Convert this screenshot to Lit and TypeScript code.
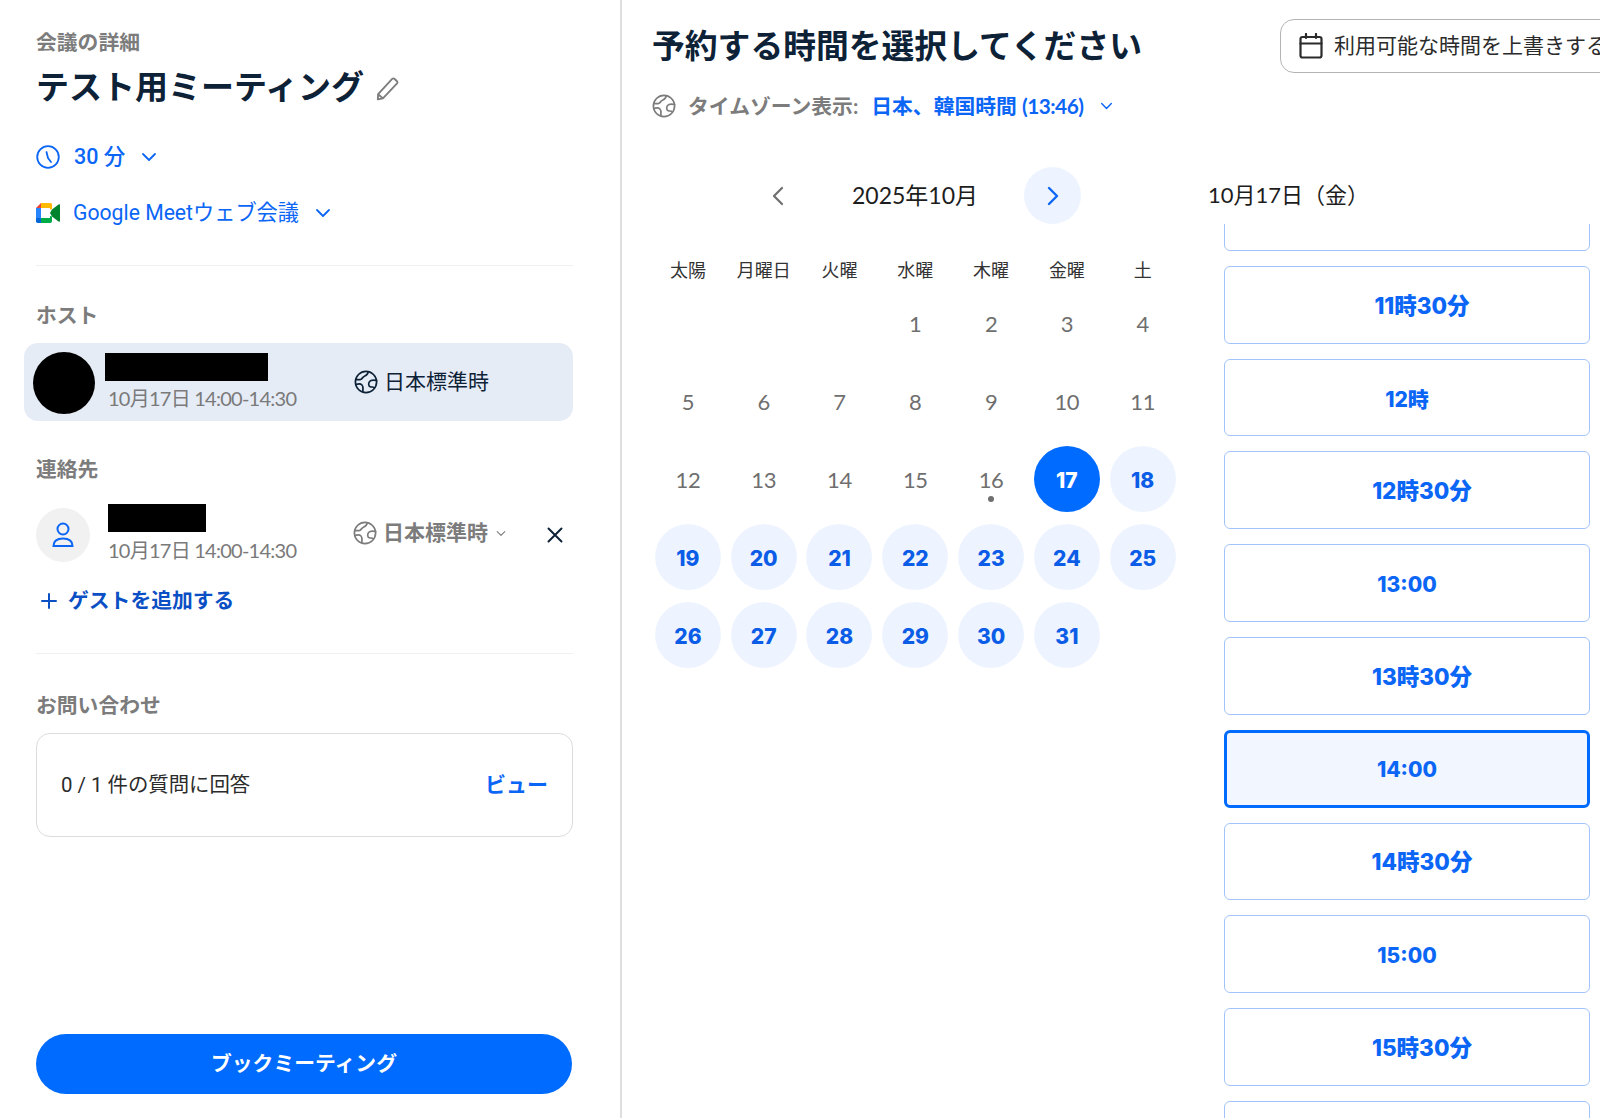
import { LitElement, html, css, svg } from 'lit';
import { customElement } from 'lit/decorators.js';
import { classMap } from 'lit/directives/class-map.js';

const chevron = (cls: string) => html`<svg class=${cls} viewBox="0 0 16 10" fill="none" stroke="currentColor" stroke-width="1.8" stroke-linecap="round" stroke-linejoin="round"><path d="M2 2l6 6 6-6"/></svg>`;

const globe = html`<svg class="globe" viewBox="0 0 24 24" fill="none" stroke="currentColor" stroke-width="1.7" stroke-linecap="round" stroke-linejoin="round">
  <circle cx="12" cy="12" r="10.6"/>
  <path d="M14 1.800c.2 3-2 3.800-3.600 4.400-1.700.6-2.200 2.800-3.800 3.300-1.200.4-2.500.2-4.700-.2"/>
  <path d="M22.600 10.500c-2.500-.6-5.500-.8-7 1-1.300 1.600-1.300 4.500.6 5.300 1.500.6 2.500-.3 3.900.8"/>
  <path d="M2 14.500c2-.6 4.500-1 6 .5 1.500 1.500 1 3.500.8 6.500"/>
</svg>`;

const meetLogo = svg`
  <path d="M5 0L0 5h5z" fill="#ea4335"/>
  <path d="M5 0h9.500A1.500 1.500 0 0 1 16 1.500V6l-2 .5V5H5z" fill="#ffba00"/>
  <path d="M0 5h5v10H0z" fill="#2684fc"/>
  <path d="M0 15h5v5H1.800A1.800 1.800 0 0 1 0 18.200z" fill="#0066da"/>
  <path d="M5 15h9v-2l2 .5v4.700a1.800 1.800 0 0 1-1.800 1.800H5z" fill="#00ac47"/>
  <path d="M14 10l2-3.500 6.500-5c.6-.4 1.500 0 1.500.8v15.400c0 .8-.9 1.200-1.500.8L16 13.500z" fill="#00832d"/>`;

const weekdays = ['太陽', '月曜日', '火曜', '水曜', '木曜', '金曜', '土'];
// first and last rows are scrolled out of view, only their boxes show
const slots = ['', '11時30分', '12時', '12時30分', '13:00', '13時30分', '14:00', '14時30分', '15:00', '15時30分', ''];

@customElement('app-root')
export class AppRoot extends LitElement {
  static styles = css`
    :host {
      display: block;
      width: 1600px;
      height: 1118px;
      overflow: hidden;
      background: #fff;
      color: #0d2237;
      font-family: Lato, "Noto Sans CJK JP", sans-serif;
    }

    .page {
      display: flex;
      height: 1118px;
    }

    /* left column */
    .side {
      box-sizing: border-box;
      width: 622px;
      flex: none;
      padding: 29px 47px 24px 36px;
      border-right: 2px solid #dedede;
      display: flex;
      flex-direction: column;
    }

    .label {
      font: 700 20.8px/28px Roboto, "Noto Sans CJK JP", sans-serif;
      color: #7c7c7c;
    }

    .title {
      display: flex;
      align-items: center;
      gap: 11px;
      margin-top: 9px;
      font: 700 33px/44px Roboto, "Noto Sans CJK JP", sans-serif;
      color: #0d2237;
    }

    .pencil {
      width: 25px;
      height: 25px;
      color: #7d7d7d;
    }

    .opt {
      display: flex;
      align-items: center;
      height: 28px;
      font: 400 21.2px/28px Roboto, "Noto Sans CJK JP", sans-serif;
      color: #0b66f6;
    }

    .opt.duration {
      margin-top: 33px;
      font-size: 21.5px;
      font-weight: 500;
    }

    .opt.meet {
      margin-top: 28px;
    }

    .opt-icon {
      width: 24px;
      height: 24px;
      margin-right: 14px;
      flex: none;
    }

    .logo {
      width: 24px;
      height: 20px;
      margin-right: 13px;
      flex: none;
    }

    .opt-chev {
      width: 16px;
      height: 10px;
      margin-left: 16px;
    }

    .rule {
      height: 1px;
      background: #f0f0f0;
      flex: none;
    }

    .rule.first {
      margin: 38px 0 36px;
    }

    .rule.second {
      margin: 38px 0 38px;
    }

    .host {
      box-sizing: border-box;
      display: flex;
      align-items: center;
      height: 78px;
      margin: 13px 0 35px -12px;
      padding-left: 9px;
      border-radius: 14px;
      background: #e6ecf6;
    }

    .photo {
      width: 62px;
      height: 62px;
      margin-top: 1px;
      border-radius: 50%;
      background: #000;
      flex: none;
      margin-right: 10px;
    }

    .info {
      flex: none;
    }

    .host .info {
      width: 249px;
      padding-bottom: 4px;
    }

    .redact {
      height: 28px;
      background: #000;
    }

    .host .redact {
      width: 163px;
    }

    .when {
      margin: 7px 0 0 3px;
      font: 400 20px/20px Lato, "Noto Sans CJK JP", sans-serif;
      letter-spacing: -0.75px;
      color: #7a7a7a;
      white-space: nowrap;
    }

    .guest .when {
      margin: 8px 0 0;
    }

    .tz {
      display: flex;
      align-items: center;
      gap: 6px;
      font: 400 21px/28px Roboto, "Noto Sans CJK JP", sans-serif;
    }

    .globe {
      width: 24px;
      height: 24px;
      flex: none;
    }

    .guest {
      display: flex;
      align-items: flex-start;
      margin-top: 20px;
    }

    .guest-avatar {
      width: 54px;
      height: 54px;
      margin: 4px 18px 0 0;
      border-radius: 50%;
      background: #f1f1f1;
      color: #0b66f6;
      flex: none;
      display: flex;
      align-items: center;
      justify-content: center;
    }

    .guest-avatar svg {
      width: 24px;
      height: 28px;
    }

    .guest .info {
      width: 245px;
    }

    .guest .redact {
      width: 98px;
    }

    .guest .tz {
      height: 58px;
      color: #7c7c7c;
      font-weight: 700;
    }

    .tz-chev {
      width: 10px;
      height: 7px;
      margin-left: 2px;
    }

    .close {
      width: 16px;
      height: 16px;
      margin: 23px 0 0 auto;
      padding-right: 10px;
      color: #0d2237;
      flex: none;
    }

    .add {
      display: flex;
      align-items: center;
      gap: 11px;
      height: 28px;
      margin: 25px 0 0 5px;
      font: 700 20.8px/28px Roboto, "Noto Sans CJK JP", sans-serif;
      color: #0a4fc4;
    }

    .add svg {
      width: 16px;
      height: 16px;
    }

    .questions {
      box-sizing: border-box;
      height: 104px;
      margin-top: 13px;
      padding: 0 24px;
      display: flex;
      align-items: center;
      justify-content: space-between;
      border: 1.5px solid #dcdcdc;
      border-radius: 14px;
      font: 400 20.4px/28px Roboto, "Noto Sans CJK JP", sans-serif;
      color: #2b2b2b;
    }

    .view {
      font-weight: 700;
      font-size: 21px;
      color: #0b66f6;
    }

    .book {
      height: 60px;
      margin: auto 1px 0 0;
      border-radius: 30px;
      background: #006bff;
      color: #fff;
      font: 700 20.8px/60px Roboto, "Noto Sans CJK JP", sans-serif;
      text-align: center;
    }

    /* right side */
    .main {
      flex: 1;
      min-width: 0;
      display: flex;
      flex-direction: column;
      overflow: hidden;
    }

    .top {
      display: flex;
      justify-content: space-between;
      padding: 19px 0 0 30px;
      height: 53px;
      flex: none;
    }

    h1 {
      margin: 2px 0 0;
      font: 700 32.8px/52px Roboto, "Noto Sans CJK JP", sans-serif;
      color: #0d2237;
      white-space: nowrap;
    }

    .override {
      box-sizing: border-box;
      width: 340px;
      height: 54px;
      margin-right: -20px;
      padding-left: 18px;
      display: flex;
      align-items: center;
      gap: 11px;
      flex: none;
      border: 1.5px solid #b4b4b4;
      border-radius: 14px;
      font: 400 21px/28px Roboto, "Noto Sans CJK JP", sans-serif;
      color: #2b2b2b;
      white-space: nowrap;
    }

    .override svg {
      width: 24px;
      height: 26px;
      flex: none;
    }

    .zone {
      display: flex;
      align-items: center;
      height: 28px;
      margin: 20px 0 0 30px;
      font: 700 20.8px/28px Lato, "Noto Sans CJK JP", sans-serif;
      color: #7c7c7c;
      white-space: nowrap;
      flex: none;
    }

    .zone .globe {
      margin-right: 12px;
    }

    .zone b {
      margin-left: 13px;
      color: #0b66f6;
      font-weight: 700;
    }

    .clock {
      letter-spacing: -0.5px;
    }

    .zone-chev {
      width: 13px;
      height: 8px;
      margin-left: 17px;
      color: #0b66f6;
    }

    .columns {
      flex: 1;
      min-height: 0;
      display: flex;
      margin-top: 47px;
    }

    .cal {
      box-sizing: border-box;
      width: 559px;
      flex: none;
      padding-left: 28px;
    }

    .month-bar {
      display: flex;
      align-items: center;
      height: 57px;
      font-size: 23px;
      color: #1d1d1d;
    }

    .prev {
      width: 16px;
      height: 24px;
      margin-left: 120px;
      color: #6f6f6f;
    }

    .month {
      width: 125px;
      margin-left: 66px;
      padding-bottom: 3px;
      white-space: nowrap;
    }

    .next {
      width: 57px;
      height: 57px;
      margin-left: 47px;
      border-radius: 50%;
      background: #eef4ff;
      color: #0b66f6;
      display: flex;
      align-items: center;
      justify-content: center;
    }

    .next svg {
      width: 16px;
      height: 24px;
    }

    .grid {
      display: grid;
      grid-template-columns: repeat(7, 75.8px);
      justify-items: center;
      align-items: center;
    }

    .dow {
      height: 60px;
      padding-top: 34px;
      box-sizing: border-box;
      font-size: 18px;
      line-height: 24px;
      color: #333;
    }

    .day {
      position: relative;
      width: 66px;
      height: 66px;
      margin: 6px 0;
      border-radius: 50%;
      font-size: 22px;
      line-height: 68px;
      text-align: center;
      color: #6f6f6f;
      letter-spacing: -0.4px;
    }

    .day.open,
    .day.picked {
      font-family: Inter, "Noto Sans CJK JP", sans-serif;
      font-size: 21px;
      font-weight: 800;
      line-height: 70px;
      letter-spacing: 0;
    }

    .day.open {
      background: #eef4ff;
      color: #0b5ce6;
    }

    .day.picked {
      background: #006bff;
      color: #fff;
    }

    .day.today::after {
      content: '';
      position: absolute;
      left: 30px;
      bottom: 10px;
      width: 6px;
      height: 6px;
      border-radius: 50%;
      background: #6f6f6f;
    }

    .times {
      flex: 1;
      min-width: 0;
      display: flex;
      flex-direction: column;
    }

    .date-head {
      height: 57px;
      padding-left: 27px;
      font-size: 22px;
      line-height: 55px;
      color: #1d1d1d;
      white-space: nowrap;
      flex: none;
    }

    .slot-list {
      flex: 1;
      min-height: 0;
      overflow: hidden;
      padding-left: 43px;
    }

    .slots {
      display: flex;
      flex-direction: column;
      gap: 15px;
      width: 366px;
      margin-top: -51px;
    }

    .slot {
      box-sizing: border-box;
      height: 77.8px;
      flex: none;
      display: flex;
      align-items: center;
      justify-content: center;
      padding-top: 2px;
      border: 1.5px solid #a3c4fb;
      border-radius: 6px;
      font-family: Inter, "Noto Sans CJK JP", sans-serif;
      font-size: 21px;
      font-weight: 800;
      color: #0b66f6;
    }

    .slot.half {
      padding: 0 0 2px 30px;
      font-size: 22.5px;
    }

    .slot.picked {
      border: 3px solid #006bff;
      background: #f1f6ff;
    }
  `;

  render() {
    const blanks = [0, 1, 2];
    const days = Array.from({ length: 31 }, (_, i) => i + 1);
    return html`
      <div class="page">
        <aside class="side">
          <div class="label">会議の詳細</div>
          <div class="title">
            テスト用ミーティング
            <svg class="pencil" viewBox="0 0 24 24" fill="none" stroke="currentColor" stroke-width="1.8" stroke-linejoin="round"><path d="M3 17.500L16.500 2.800c.6-.6 1.500-.6 2.100-.1l2.500 2.300c.6.600.6 1.500.1 2.100L7.600 21.500l-4.900 1z"/><path d="M3 17.500l4.600 4"/></svg>
          </div>
          <div class="opt duration">
            <svg class="opt-icon" viewBox="0 0 24 24" fill="none" stroke="currentColor" stroke-width="1.8" stroke-linecap="round" stroke-linejoin="round"><circle cx="12" cy="12" r="10.8"/><path d="M10.500 7l1.500 6 3 4"/></svg>
            30 分
            ${chevron('opt-chev')}
          </div>
          <div class="opt meet">
            <svg class="logo" viewBox="0 0 24 20">${meetLogo}</svg>
            Google Meetウェブ会議
            ${chevron('opt-chev')}
          </div>
          <div class="rule first"></div>

          <div class="label">ホスト</div>
          <div class="host">
            <div class="photo"></div>
            <div class="info">
              <div class="redact"></div>
              <div class="when">10月17日 14:00-14:30</div>
            </div>
            <div class="tz">${globe}日本標準時</div>
          </div>

          <div class="label">連絡先</div>
          <div class="guest">
            <div class="guest-avatar">
              <svg viewBox="0 0 24 28" fill="none" stroke="currentColor" stroke-width="2"><circle cx="12" cy="8" r="5.5"/><path d="M2.500 25c0-5 3.500-7.500 9.500-7.500s9.500 2.500 9.500 7.500z"/></svg>
            </div>
            <div class="info">
              <div class="redact"></div>
              <div class="when">10月17日 14:00-14:30</div>
            </div>
            <div class="tz">${globe}日本標準時${chevron('tz-chev')}</div>
            <svg class="close" viewBox="0 0 16 16" fill="none" stroke="currentColor" stroke-width="2" stroke-linecap="round"><path d="M1.500 1.500l13 13M14.500 1.500l-13 13"/></svg>
          </div>
          <div class="add">
            <svg viewBox="0 0 16 16" fill="none" stroke="currentColor" stroke-width="2" stroke-linecap="round"><path d="M8 1v14M1 8h14"/></svg>
            ゲストを追加する
          </div>
          <div class="rule second"></div>

          <div class="label">お問い合わせ</div>
          <div class="questions">
            <span>0 / 1 件の質問に回答</span>
            <span class="view">ビュー</span>
          </div>
          <div class="book">ブックミーティング</div>
        </aside>

        <main class="main">
          <div class="top">
            <h1>予約する時間を選択してください</h1>
            <div class="override">
              <svg viewBox="0 0 24 26" fill="none" stroke="currentColor" stroke-width="2.2" stroke-linecap="round" stroke-linejoin="round"><rect x="1.500" y="4" width="21" height="20.5" rx="2"/><path d="M1.500 10.500h21M7 1v4M17 1v4"/></svg>
              利用可能な時間を上書きする
            </div>
          </div>
          <div class="zone">
            ${globe}<span>タイムゾーン表示:</span>
            <b>日本、韓国時間 <span class="clock">(13:46)</span></b>
            ${chevron('zone-chev')}
          </div>
          <div class="columns">
            <section class="cal">
              <div class="month-bar">
                <svg class="prev" viewBox="0 0 16 24" fill="none" stroke="currentColor" stroke-width="2.2" stroke-linecap="round" stroke-linejoin="round"><path d="M12 4l-8 8 8 8"/></svg>
                <span class="month">2025年10月</span>
                <div class="next">
                  <svg viewBox="0 0 16 24" fill="none" stroke="currentColor" stroke-width="2.4" stroke-linecap="round" stroke-linejoin="round"><path d="M4 4l8 8-8 8"/></svg>
                </div>
              </div>
              <div class="grid">
                ${weekdays.map((d) => html`<div class="dow">${d}</div>`)}
                ${blanks.map(() => html`<div></div>`)}
                ${days.map((d) => html`<div class=${classMap({ day: true, today: d === 16, picked: d === 17, open: d > 17 })}>${d}</div>`)}
              </div>
            </section>
            <section class="times">
              <div class="date-head">10月17日（金）</div>
              <div class="slot-list">
                <div class="slots">
                  ${slots.map((s) => html`<div class=${classMap({ slot: true, half: s.includes('分'), picked: s === '14:00' })}>${s}</div>`)}
                </div>
              </div>
            </section>
          </div>
        </main>
      </div>
    `;
  }
}
